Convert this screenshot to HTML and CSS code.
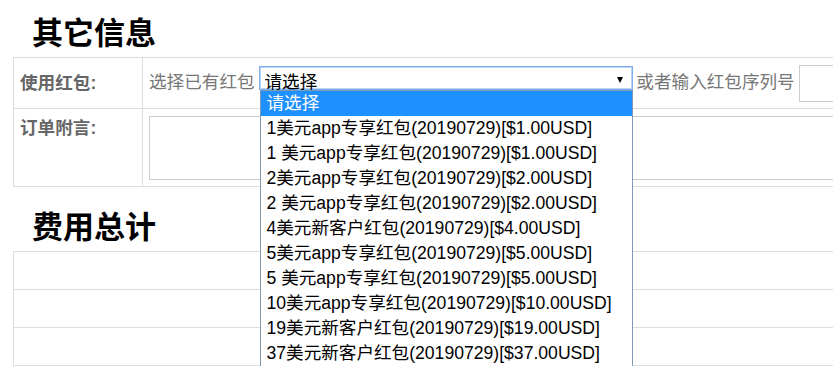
FILE: index.html
```html
<!DOCTYPE html>
<html lang="zh-CN">
<head>
    <meta charset="UTF-8">
    <meta name="viewport" content="width=device-width, initial-scale=1.0">
    <title>订单信息</title>
    <link rel="stylesheet" href="styles.css">
</head>
<body>
    <div class="page">

        <h2 class="title">其它信息</h2>
        <table class="info-table">
            <tr class="row-coupon">
                <td class="label">使用红包:</td>
                <td class="field">
                    <span class="hint">选择已有红包</span>
                    <div class="select-wrap">
                        <div class="select-box">
                            <span class="select-text">请选择</span>
                            <span class="arrow"></span>
                        </div>
                        <ul class="options">
                            <li class="active">请选择</li>
                            <li>1美元app专享红包(20190729)[$1.00USD]</li>
                            <li>1 美元app专享红包(20190729)[$1.00USD]</li>
                            <li>2美元app专享红包(20190729)[$2.00USD]</li>
                            <li>2 美元app专享红包(20190729)[$2.00USD]</li>
                            <li>4美元新客户红包(20190729)[$4.00USD]</li>
                            <li>5美元app专享红包(20190729)[$5.00USD]</li>
                            <li>5 美元app专享红包(20190729)[$5.00USD]</li>
                            <li>10美元app专享红包(20190729)[$10.00USD]</li>
                            <li>19美元新客户红包(20190729)[$19.00USD]</li>
                            <li>37美元新客户红包(20190729)[$37.00USD]</li>
                        </ul>
                    </div>
                    <span class="hint">或者输入红包序列号</span>
                    <input class="code-input" type="text">
                </td>
            </tr>
            <tr class="row-note">
                <td class="label">订单附言:</td>
                <td class="field">
                    <textarea class="note"></textarea>
                </td>
            </tr>
        </table>

        <h2 class="title">费用总计</h2>
        <table class="total-table">
            <tr><td><div class="cell"></div></td></tr>
            <tr><td><div class="cell"></div></td></tr>
            <tr><td><div class="cell"></div></td></tr>
        </table>

    </div>
</body>
</html>
```

FILE: styles.css
```css
*{
    padding:0;
    margin:0;
    box-sizing: border-box;
}
html,body{
    overflow: hidden;
}
body{
    font-family: "Liberation Sans", "Noto Sans CJK SC", sans-serif;
    font-size: 17.6px;
    color:#000;
    background:#fff;
}
.page{
    width:1100px;
    padding-left:13px;
}

.title{
    font-size:31px;
    line-height:40px;
    font-weight:bold;
    padding:14px 0 3px 19px;
}

table{
    border-collapse: collapse;
    width:1050px;
}
td{
    border:1px solid #ddd;
    padding:6px;
}

.info-table{
    margin-bottom:7px;
}
.info-table .label{
    width:129px;
    min-width:129px;
    white-space: nowrap;
    color:#666;
    font-weight:bold;
    line-height:26px;
    vertical-align: middle;
}
.row-note .label{
    vertical-align: top;
}
.row-coupon td{
    height:51px;
}
.field{
    white-space: nowrap;
}
.hint{
    color:#777;
}

.select-wrap{
    display:inline-block;
    position:relative;
    margin-right:-2px;
}
.select-box{
    width:374px;
    height:24px;
    border:1px solid #7faeea;
    box-shadow: 0 0 0 1px #b9d3f5 inset;
    display:flex;
    align-items: flex-start;
    justify-content: space-between;
    padding:4px 9px 0 4px;
    background:#fff;
}
.select-text{
    line-height:22px;
}
.arrow{
    align-self: center;
    width:0;
    height:0;
    border-left:3.5px solid transparent;
    border-right:3.5px solid transparent;
    border-top:6px solid #000;
}

/* opened list of the select */
.options{
    position:absolute;
    left:1px;
    top:24px;
    width:373px;
    border:1px solid #7f9ab8;
    background:#fff;
    list-style: none;
    z-index:10;
}
.options li{
    height:25px;
    line-height:25px;
    padding-left:5px;
}
.options li.active{
    background:#1e90ff;
    color:#fff;
}

.code-input{
    width:120px;
    height:37px;
    border:1px solid #ccc;
    vertical-align: middle;
    margin-left:-1px;
}

.row-note td{
    height:78px;
}
.note{
    display:block;
    width:900px;
    height:64px;
    border:1px solid #ccc;
    resize:none;
}

.total-table td{
    padding:0;
}
.total-table .cell{
    height:37px;
}
```
